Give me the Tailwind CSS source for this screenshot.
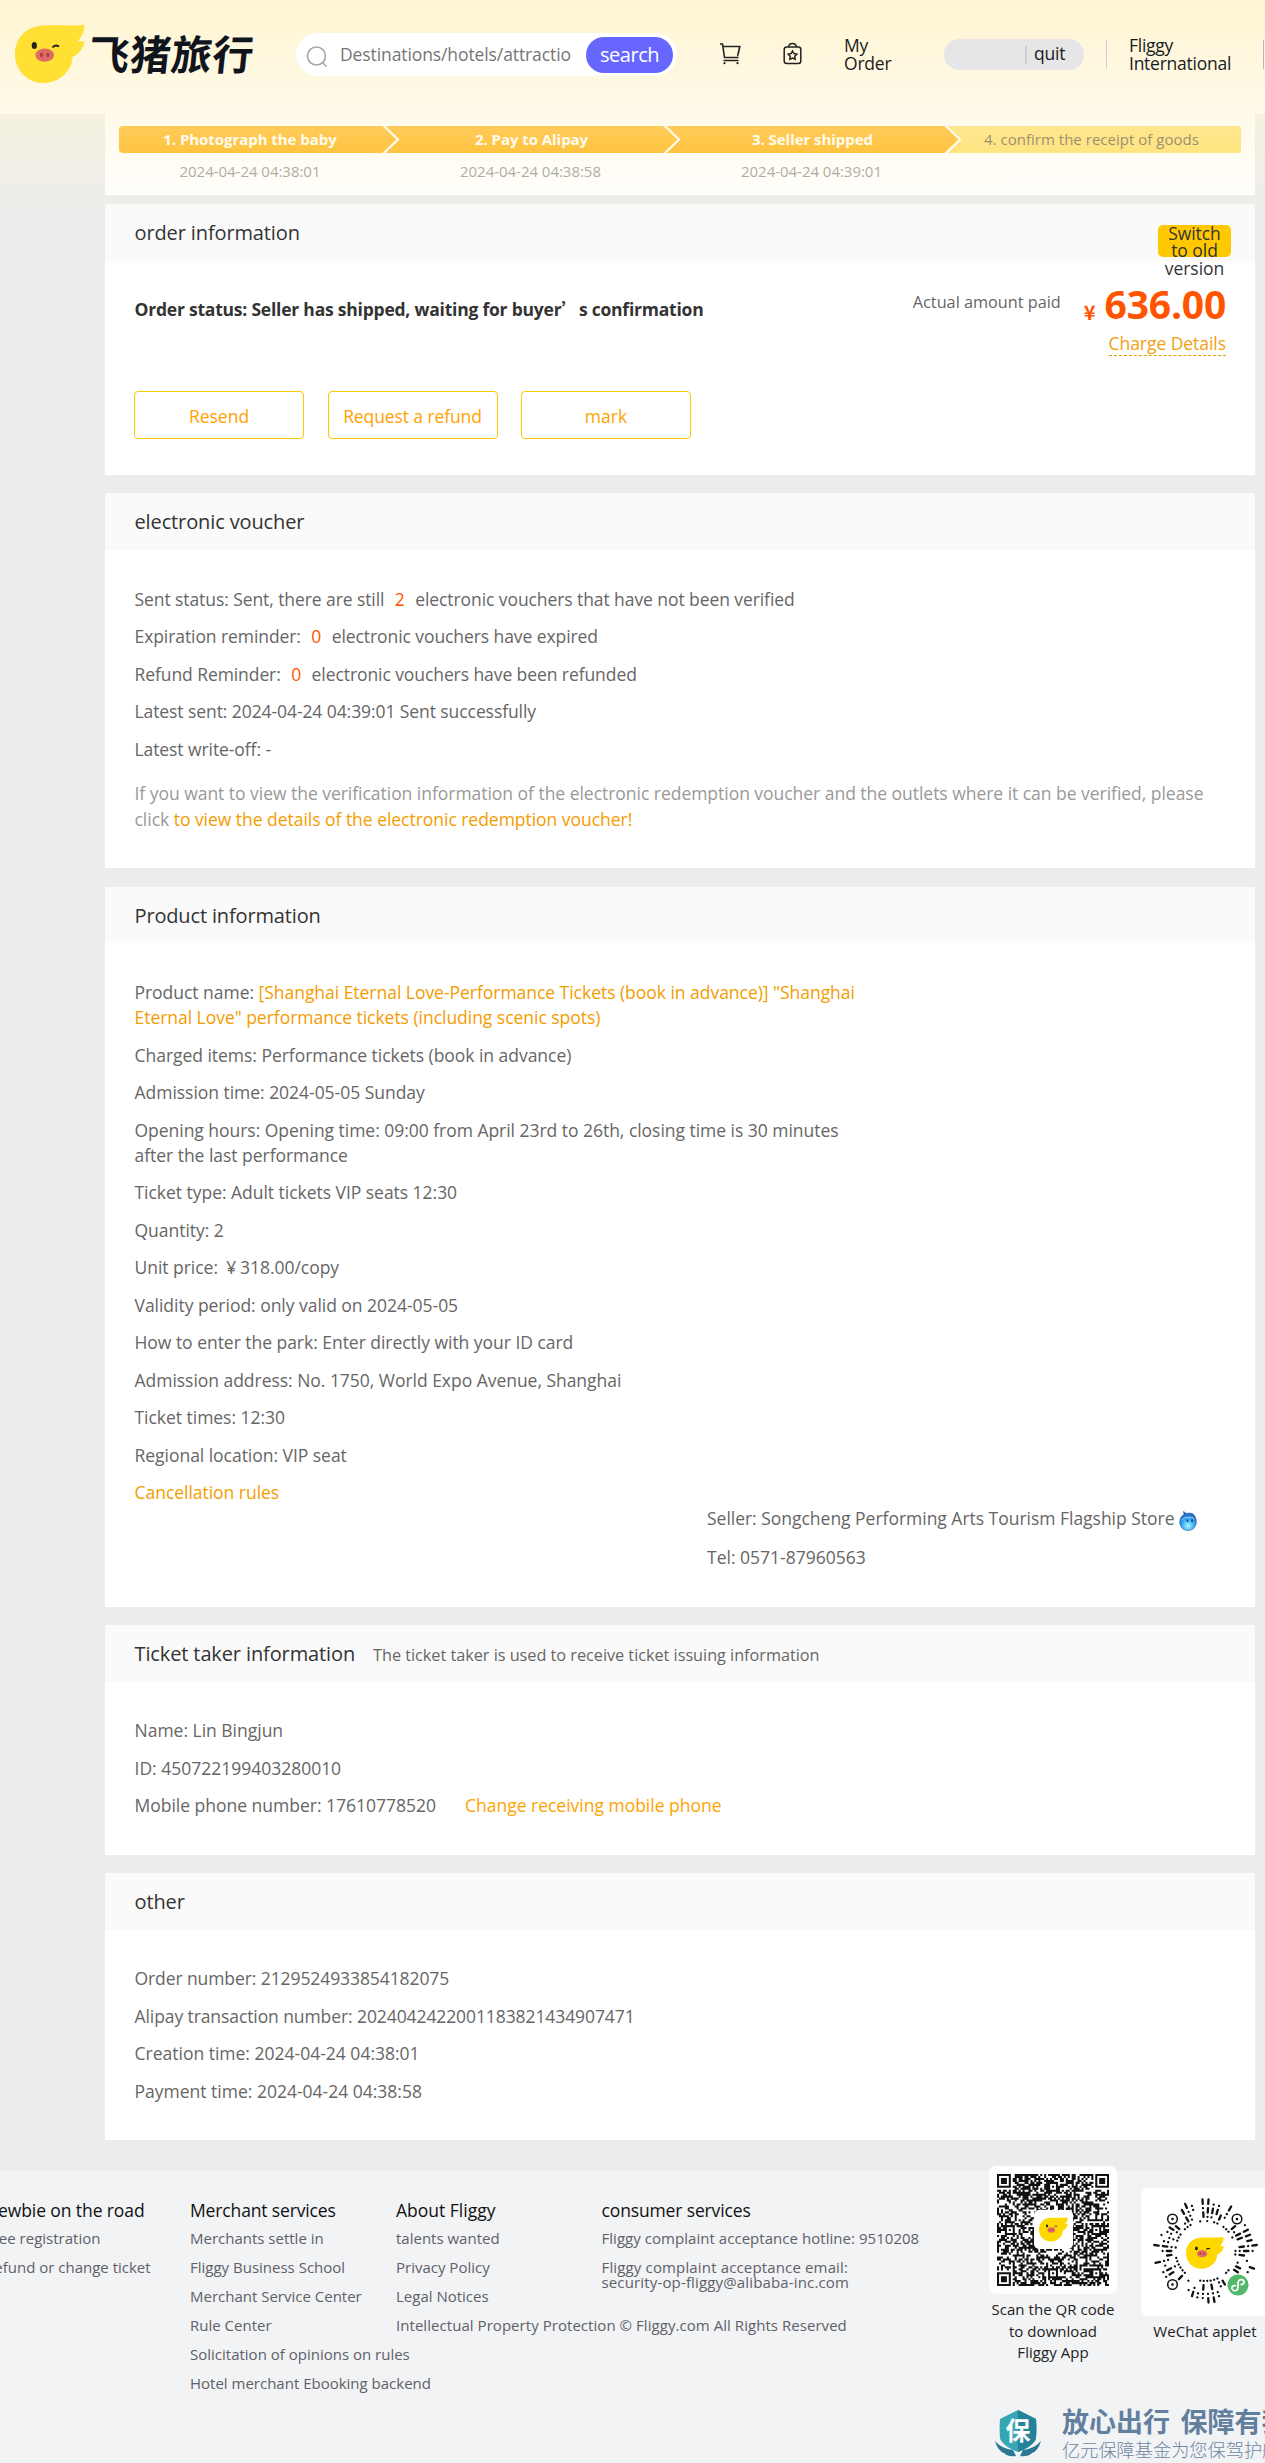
<!DOCTYPE html>
<html lang="en">
<head>
<meta charset="utf-8">
<title>Fliggy order details</title>
<script src="https://cdn.jsdelivr.net/npm/@tailwindcss/browser@4"></script>
</head>
<body class="relative h-[2463px] w-[1265px] overflow-hidden bg-[#ececec] font-['Open_Sans','Noto_Sans_CJK_SC',sans-serif] text-[17.5px] leading-[25px] text-[#666]">

<svg class="hidden">
  <defs>
    <symbol id="pig" viewBox="0 0 70 58">
      <path d="M28 0.5C38 0 56 1 69.500 0C69.500 7 66 13 62.500 16.500L69.500 16C69 23 64 29 57.500 32C57 47 43 58 28.500 58C12 58 0 45 0 29C0 13 11 1.500 28 0.500Z"/>
      <ellipse cx="19.300" cy="20.500" rx="2.600" ry="3.500" fill="#222"/>
      <path d="M37.500 22.500Q40 19 44 21.500" fill="none" stroke="#222" stroke-width="2"/>
      <ellipse cx="29.700" cy="30.200" rx="9.300" ry="6.600" fill="#e06a66"/>
      <ellipse cx="26.500" cy="30" rx="1.600" ry="2.300" fill="#b04040"/>
      <ellipse cx="32.800" cy="30" rx="1.600" ry="2.300" fill="#b04040"/>
    </symbol>
  </defs>
</svg>

<header class="h-[114px] bg-white text-[#1a1b20]">
  <div class="relative z-10 flex items-start">
    <svg class="ml-[15px] mt-[25px] h-[58px] w-[70px] shrink-0 fill-[#ffe033]"><use href="#pig"/></svg>
    <div class="ml-[4px] mt-[29px] w-[167px] shrink-0 -skew-x-6 whitespace-nowrap font-['Noto_Sans_CJK_SC',sans-serif] text-[41px] leading-[46px] font-bold tracking-[0.3px] text-[#10141c]">飞猪旅行</div>
    <div class="ml-[40px] mt-[33px] flex h-[43px] w-[381px] shrink-0 items-center rounded-full bg-white">
      <svg class="ml-[10px] mt-[4px] size-[22px] shrink-0" viewBox="0 0 22 22" fill="none" stroke="#a5a5ab" stroke-width="1.600"><circle cx="10.500" cy="10" r="9"/><path d="M16.500 16.500L20.500 20.500"/></svg>
      <div class="ml-[12px] w-[232px] overflow-hidden whitespace-nowrap tracking-[-0.1px] text-[#757575]">Destinations/hotels/attractio</div>
      <div class="ml-[14px] flex h-[36px] w-[87px] shrink-0 items-center justify-center rounded-full bg-[#6766ff] text-[20px] tracking-[-0.45px] text-white">search</div>
    </div>
    <svg class="ml-[42px] mt-[42px] h-[23px] w-[22px] shrink-0" viewBox="0 0 22 23" fill="none" stroke="#222" stroke-width="1.600"><path d="M1 2H3.500L5.500 15.500H19.500M3.800 4.500H20.800L19 12.500Q18.800 13.500 18 13.500M4.500 18.500H19.500"/><circle cx="5.500" cy="21.200" r="1.100" fill="#222" stroke="none"/><circle cx="18.500" cy="21.200" r="1.100" fill="#222" stroke="none"/></svg>
    <svg class="ml-[42px] mt-[42px] h-[23px] w-[19px] shrink-0" viewBox="0 0 19 23" fill="none" stroke="#222" stroke-width="1.500"><rect x="1.200" y="5" width="16.600" height="16.500" rx="2.500"/><path d="M5.500 5Q6 1.500 9.500 1.500T13.500 5"/><path d="M9.500 9L10.900 11.500L13.800 12.100L11.800 14.200L12.100 17.200L9.500 16L6.900 17.200L7.200 14.200L5.200 12.100L8.100 11.500Z"/></svg>
    <div class="ml-[42px] mt-[37px] w-[100px] shrink-0 leading-[17.500px] tracking-[-0.2px]">My<br>Order</div>
    <div class="mt-[39px] flex h-[31px] w-[140px] shrink-0 items-center rounded-full bg-[#e6e6e8]">
      <i class="ml-[81px] h-[18px] w-[2px] bg-[#cfcfd4]"></i><span class="-mt-0.5 ml-[7px] tracking-[-0.2px]">quit</span>
    </div>
    <i class="ml-[22px] mt-[40px] h-[29px] w-px shrink-0 bg-[#cfcfd4]"></i>
    <div class="ml-[22px] mt-[37px] w-[134px] shrink-0 leading-[17.500px] tracking-[-0.25px]">Fliggy<br>International</div>
    <i class="mt-[40px] h-[29px] w-px shrink-0 bg-[#b5b5bb]"></i>
  </div>
</header>

<main class="ml-[105px] w-[1150px]">
  <section class="h-[81px] bg-white px-[14px] pt-[12px]">
    <div class="relative text-[15px] leading-[27px]">
      <div class="grid h-[27px] grid-cols-[280px_281px_281px_280px] overflow-hidden rounded-[4px] bg-[#ffad00] text-center font-bold tracking-[-0.05px] text-white">
        <div class="pr-[18px]">1. Photograph the baby</div>
        <div class="pr-[16px]">2. Pay to Alipay</div>
        <div class="pr-[16px]">3. Seller shipped</div>
        <div class="bg-[#ffdc5d] pl-[23px] text-left font-normal tracking-[0.02px] text-[#5f5638]">4. confirm the receipt of goods</div>
      </div>
      <svg class="absolute left-0 top-0 h-[27px] w-[1122px]" viewBox="0 0 1122 27" fill="none" stroke="#fff" stroke-width="2.200"><path d="M843 0H825V27H843Z" fill="#ffdc5d" stroke="none"/><path d="M825 0L841 13.500L825 27Z" fill="#ffad00" stroke="none"/><path d="M264 -1L279 13.500L264 28M545 -1L560 13.500L545 28M826 -1L841 13.500L826 28"/></svg>
    </div>
    <div class="grid grid-cols-[280px_281px_281px_280px] pt-[7px] text-center text-[15px] leading-[22px] tracking-[-0.03px] text-[#999]">
      <div class="pr-[18px]">2024-04-24 04:38:01</div>
      <div class="pr-[18px]">2024-04-24 04:38:58</div>
      <div class="pr-[18px]">2024-04-24 04:39:01</div>
    </div>
  </section>

  <section class="mt-[9px] h-[271px] bg-white">
    <div class="flex h-[57px] justify-between bg-[#fafafa] pl-[29.500px] pr-[24px]">
      <h2 class="pt-[16px] text-[20px] tracking-[-0.12px] text-[#333]">order information</h2>
      <div class="relative z-10 mt-[21px] h-[32px] w-[73px] rounded-[5px] bg-[#ffc800] text-center leading-[17.250px] tracking-[-0.05px] text-[#333]">Switch<br>to old<br>version</div>
    </div>
    <div class="flex justify-between pl-[29.500px] pr-[29px]">
      <div class="pt-[35px] font-bold tracking-[-0.22px] text-[#333]">Order status: Seller has shipped, waiting for buyer<span class="inline-block w-[17.500px] font-['Noto_Sans_CJK_SC']">’</span>s confirmation</div>
      <div class="flex">
        <div class="mr-[23px] pt-[29px] text-[16.250px]">Actual amount paid</div>
        <div class="flex flex-col items-end">
          <div class="mt-[19px] flex h-[51px] items-baseline font-bold text-[#ff5500]"><span class="relative top-[1px] mr-[9px] font-['Noto_Sans_CJK_SC'] text-[20px]">¥</span><span class="text-[39px] leading-[48px] tracking-[-0.2px]">636.00</span></div>
          <div class="border-b border-dashed border-[#e89a0c] leading-[24px] tracking-[-0.05px] text-[#f0a010]">Charge Details</div>
        </div>
      </div>
    </div>
    <div class="mt-[35px] flex gap-[23.500px] pl-[29px] text-center leading-[49px] text-[#ffa200]">
      <div class="h-[48px] w-[170px] rounded-[4px] border border-[#ffc800]">Resend</div>
      <div class="h-[48px] w-[170px] rounded-[4px] border border-[#ffc800] tracking-[-0.1px]">Request a refund</div>
      <div class="h-[48px] w-[170px] rounded-[4px] border border-[#ffc800]">mark</div>
    </div>
  </section>

  <section class="mt-[18px] h-[375px] bg-white">
    <h2 class="h-[57px] bg-[#fafafa] pl-[29.500px] pt-[16px] text-[20px] tracking-[-0.12px] text-[#333]">electronic voucher</h2>
    <div class="flex flex-col gap-[12.500px] pl-[29.500px] pt-[36.500px] tracking-[-0.08px]">
      <p>Sent status: Sent, there are still <span class="mx-[6px] text-[#ff5500]">2</span> electronic vouchers that have not been verified</p>
      <p>Expiration reminder: <span class="mx-[6px] text-[#ff5500]">0</span> electronic vouchers have expired</p>
      <p>Refund Reminder: <span class="mx-[6px] text-[#ff5500]">0</span> electronic vouchers have been refunded</p>
      <p>Latest sent: 2024-04-24 04:39:01 Sent successfully</p>
      <p>Latest write-off: -</p>
    </div>
    <p class="pl-[29.500px] pt-[18.500px] leading-[26px] tracking-[-0.03px] text-[#999]">If you want to view the verification information of the electronic redemption voucher and the outlets where it can be verified, please<br>click <span class="text-[#f39c00]">to view the details of the electronic redemption voucher!</span></p>
  </section>

  <section class="mt-[19px] h-[720px] bg-white">
    <h2 class="h-[56px] bg-[#fafafa] pl-[29.500px] pt-[16px] text-[20px] tracking-[-0.15px] text-[#333]">Product information</h2>
    <div class="flex flex-col gap-[12.500px] pl-[29.500px] pt-[37px] tracking-[-0.03px]">
      <p>Product name: <span class="text-[#f39c00]">[Shanghai Eternal Love-Performance Tickets (book in advance)] "Shanghai<br>Eternal Love" performance tickets (including scenic spots)</span></p>
      <p>Charged items: Performance tickets (book in advance)</p>
      <p>Admission time: 2024-05-05 Sunday</p>
      <p>Opening hours: Opening time: 09:00 from April 23rd to 26th, closing time is 30 minutes<br>after the last performance</p>
      <p>Ticket type: Adult tickets VIP seats 12:30</p>
      <p>Quantity: 2</p>
      <p>Unit price: <span class="inline-block w-[17.500px] text-center">¥</span>318.00/copy</p>
      <p>Validity period: only valid on 2024-05-05</p>
      <p>How to enter the park: Enter directly with your ID card</p>
      <p>Admission address: No. 1750, World Expo Avenue, Shanghai</p>
      <p>Ticket times: 12:30</p>
      <p>Regional location: VIP seat</p>
      <p class="text-[#f39c00]">Cancellation rules</p>
    </div>
    <div class="flex flex-col gap-[13.500px] pl-[602px] pt-px">
      <div class="flex items-center tracking-[-0.02px]">Seller: Songcheng Performing Arts Tourism Flagship Store
        <svg class="ml-[5px] mt-[5px] h-[20px] w-[18px]" viewBox="0 0 18 20"><defs><radialGradient id="drop" cx=".5" cy=".75" r=".65"><stop offset="0" stop-color="#a8f4ff"/><stop offset=".55" stop-color="#35aef5"/><stop offset="1" stop-color="#2a5fb8"/></radialGradient></defs><path d="M4.500 0.500L7.500 2.500Q13 1 15.500 4.500Q18 8 17.200 12.500Q15.500 19.500 9 19.500T0.800 12.500Q0.300 6 5 3.500Z" fill="url(#drop)" stroke="#3a6fc0" stroke-width=".7"/><path d="M2.500 9Q6 5.500 9 6.500Q13 5.500 15.500 8" stroke="#8fc8f5" fill="none"/><path d="M8.500 8.500V11M13 8.500V11" stroke="#123a80" stroke-width="1.500"/></svg>
      </div>
      <div>Tel: 0571-87960563</div>
    </div>
  </section>

  <section class="mt-[18px] h-[230px] bg-white">
    <div class="flex h-[57px] items-baseline bg-[#fafafa] pl-[29.500px] pt-[16px]">
      <h2 class="text-[20px] tracking-[-0.12px] text-[#333]">Ticket taker information</h2>
      <span class="ml-[18px] text-[16.250px] tracking-[-0.02px]">The ticket taker is used to receive ticket issuing information</span>
    </div>
    <div class="flex flex-col gap-[12.500px] pl-[29.500px] pt-[36px] tracking-[-0.01px]">
      <p>Name: Lin Bingjun</p>
      <p>ID: 450722199403280010</p>
      <p>Mobile phone number: 17610778520<span class="ml-[29px] text-[#ffa200]">Change receiving mobile phone</span></p>
    </div>
  </section>

  <section class="mt-[18px] h-[267px] bg-white">
    <h2 class="h-[57px] bg-[#fafafa] pl-[29.500px] pt-[16px] text-[20px] tracking-[-0.12px] text-[#333]">other</h2>
    <div class="flex flex-col gap-[12.500px] pl-[29.500px] pt-[36px] tracking-[-0.09px]">
      <p>Order number: 2129524933854182075</p>
      <p>Alipay transaction number: 2024042422001183821434907471</p>
      <p class="tracking-[0px]">Creation time: 2024-04-24 04:38:01</p>
      <p class="tracking-[0px]">Payment time: 2024-04-24 04:38:58</p>
    </div>
  </section>
</main>

<footer class="mt-[31px] h-[292px] bg-[#f1f3f5]">
  <div class="flex h-[230px] items-start whitespace-nowrap text-[15px] leading-[15px] text-[#5f6168]">
    <div class="ml-[-15px] flex w-[205px] shrink-0 flex-col gap-[14px] pt-[30px]">
      <h3 class="mb-[-2px] text-[17.500px] leading-[18px] tracking-[-0.1px] text-[#111]">Newbie on the road</h3>
      <p>Free registration</p><p>Refund or change ticket</p>
    </div>
    <div class="flex w-[206px] shrink-0 flex-col gap-[14px] pt-[30px]">
      <h3 class="mb-[-2px] text-[17.500px] leading-[18px] tracking-[-0.14px] text-[#111]">Merchant services</h3>
      <p>Merchants settle in</p><p>Fliggy Business School</p><p>Merchant Service Center</p><p>Rule Center</p><p>Solicitation of opinions on rules</p><p>Hotel merchant Ebooking backend</p>
    </div>
    <div class="flex w-[205.500px] shrink-0 flex-col gap-[14px] pt-[30px]">
      <h3 class="mb-[-2px] text-[17.500px] leading-[18px] text-[#111]">About Fliggy</h3>
      <p>talents wanted</p><p>Privacy Policy</p><p>Legal Notices</p><p class="tracking-[0.05px]">Intellectual Property Protection © Fliggy.com All Rights Reserved</p>
    </div>
    <div class="flex w-[387.500px] shrink-0 flex-col gap-[14px] pt-[30px]">
      <h3 class="mb-[-2px] text-[17.500px] leading-[18px] tracking-[-0.14px] text-[#111]">consumer services</h3>
      <p class="tracking-[0.04px]">Fliggy complaint acceptance hotline: 9510208</p><p class="tracking-[0.15px]">Fliggy complaint acceptance email:<br>security-op-fliggy@alibaba-inc.com</p>
    </div>
    <div class="mt-[-5px] w-[128px] shrink-0 text-center leading-[21.500px] text-[#222]">
      <div class="relative h-[128px] rounded-[7px] bg-white p-[8px]">
        <svg id="qr" class="size-[112px]" viewBox="0 0 57 57" fill="#111"></svg>
        <div class="absolute left-[45px] top-[44px] flex size-[39px] items-center justify-center rounded-[5px] bg-white"><svg class="h-[25px] w-[29px] fill-[#ffd800]"><use href="#pig"/></svg></div>
      </div>
      <p class="pt-[5px] tracking-[0.04px]">Scan the QR code<br>to download<br>Fliggy App</p>
    </div>
    <div class="ml-[24px] mt-[17px] w-[128px] shrink-0 text-center leading-[21.500px] text-[#222]">
      <div class="relative h-[128px] rounded-[7px] bg-white">
        <svg id="wx" class="size-[128px]" viewBox="0 0 128 128" stroke="#111" stroke-width="2.300" stroke-linecap="round"></svg>
        <svg class="absolute left-[45px] top-[49px] h-[32px] w-[38px] fill-[#ffd800]"><use href="#pig"/></svg>
        <svg class="absolute left-[86px] top-[86px] size-[22px]" viewBox="0 0 22 22"><circle cx="11" cy="11" r="10.500" fill="#54b86a"/><path d="M8.500 11.500Q4.500 11.500 5 14.500Q6 17.500 9 16.500Q11 15.500 11 13V9Q11 6 14 5.500Q17 5.500 17 8Q17 10.500 14 10.500" fill="none" stroke="#fff" stroke-width="1.700" stroke-linecap="round"/></svg>
      </div>
      <p class="pt-[5px] tracking-[0.04px]">WeChat applet</p>
    </div>
  </div>
  <div class="flex items-start whitespace-nowrap pl-[994px] font-['Noto_Sans_CJK_SC',sans-serif]">
    <svg class="mt-[8px] h-[48px] w-[48px] shrink-0" viewBox="0 0 48 48"><path d="M24 1L42 10Q43 25 41.500 31Q36 39 24 43Q12 39 6.500 31Q5 25 6 10Z" fill="#36a6b5"/><path d="M24 1V43Q36 39 41.500 31Q43 25 42 10Z" fill="#22839b"/><path d="M1 32Q8 40 19 41L22 47Q14 48 10 44Q4 42 1 32ZM47 32Q40 40 29 41L26 47Q34 48 38 44Q44 42 47 32Z" fill="#2b7791"/><text x="24" y="31" font-size="25" font-weight="700" text-anchor="middle" fill="#fff">保</text></svg>
    <div class="ml-[20px] mt-[3px]">
      <div class="text-[27px] leading-[34px] font-bold text-[#627f9e]">放心出行<span class="ml-[10.500px]">保障有我</span></div>
      <div class="text-[18.200px] leading-[22px] font-light text-[#6f87a0]">亿元保障基金为您保驾护航</div>
    </div>
  </div>
</footer>

<!-- warm tint fading down from the top of the page -->
<div class="pointer-events-none absolute inset-x-0 top-0 h-[220px] bg-linear-to-b from-[#fff5d2] to-[#fff5d2]/0"></div>

<script>
  let seed = 20240424;
  const rnd = () => (seed = (seed * 1103515245 + 12345) % 2147483648) / 2147483648;

  // QR modules with three finder squares and small alignment marks
  const N = 57;
  const grid = [...Array(N)].map(() => [...Array(N)].map(() => rnd() > 0.45));
  const mark = (x0, y0, n, gap) => {
    for (let y = -gap; y < n + gap; y++) for (let x = -gap; x < n + gap; x++) {
      const r = Math.min(x, y, n - 1 - x, n - 1 - y);
      if (grid[y0 + y] && x0 + x >= 0 && x0 + x < N) grid[y0 + y][x0 + x] = r >= 0 && r !== 1;
    }
  };
  mark(0, 0, 7, 1); mark(N - 7, 0, 7, 1); mark(0, N - 7, 7, 1);
  [[26, 4], [4, 26], [48, 26], [26, 48], [48, 48]].forEach(([x, y]) => mark(x, y, 5, 0));
  let d = '';
  grid.forEach((row, y) => row.forEach((on, x) => { if (on) d += `M${x} ${y}h1.05v1.05h-1.05z`; }));
  document.getElementById('qr').innerHTML = `<path d="${d}"/>`;

  // radial mini-program code
  const c = [64.5, 63], eyes = [[31.5, 31], [96, 31], [31.5, 96.500], [97, 97]];
  let wx = '';
  for (let i = 0; i < 54; i++) {
    const a = i / 54 * Math.PI * 2, ux = Math.cos(a), uy = Math.sin(a);
    let r = 30;
    while (r < 50) {
      const len = r === 30 ? 0.01 : rnd() > 0.5 ? 0.01 : 4.5;
      const mx = c[0] + ux * (r + len / 2), my = c[1] + uy * (r + len / 2);
      const clear = eyes.every(([x, y], k) => Math.hypot(mx - x, my - y) > (k === 3 ? 14 : 9));
      if (clear && rnd() > (r > 30 ? 0.3 : 0.4)) wx += `M${c[0] + ux * r} ${c[1] + uy * r}L${c[0] + ux * (r + len)} ${c[1] + uy * (r + len)}`;
      r += len + 4.2;
    }
  }
  document.getElementById('wx').innerHTML = `<path d="${wx}"/>` +
    eyes.slice(0, 3).map(([x, y]) => `<circle cx="${x}" cy="${y}" r="4.800" fill="none" stroke-width="1.500"/><circle cx="${x}" cy="${y}" r="1.300" stroke="none" fill="#111"/>`).join('');
</script>
</body>
</html>
